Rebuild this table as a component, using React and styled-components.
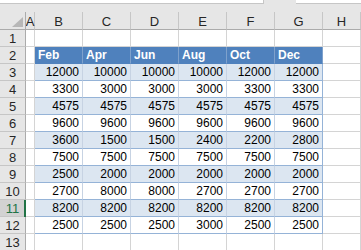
import React from 'react'
import styled, { createGlobalStyle } from 'styled-components'

const GlobalStyle = createGlobalStyle`
  html, body {
    margin: 0;
    padding: 0;
    background: #ffffff;
  }
  body {
    font-family: "Liberation Sans", Arial, sans-serif;
    overflow: hidden;
  }
`

const Sheet = styled.div`
  width: 361px;
  height: 250px;
  overflow: hidden;
  background: #e6e6e6;
`

const FormulaStrip = styled.div`
  display: flex;
  height: 4px;
  gap: 0;
`

const FormulaBox = styled.div`
  height: 3px;
  background: #ffffff;
  border-bottom: 1px solid #c6c6c6;
  border-right: ${p => (p.$edge ? '1px solid #c6c6c6' : 'none')};
  width: ${p => p.$w}px;
  margin-left: ${p => p.$ml || 0}px;
  flex: ${p => (p.$grow ? 1 : 'none')};
`

const Grid = styled.div`
  display: grid;
  grid-template-columns: 26px 9px repeat(6, 48px) 1fr;
  grid-template-rows: 8px 18px repeat(13, 17px);
  margin-top: 0;
`

const Spacer = styled.div`
  grid-column: 1 / -1;
  background: #e6e6e6;
`

const Corner = styled.div`
  position: relative;
  background: #e6e6e6;
  border-right: 1px solid #ababab;
  border-bottom: 1px solid #ababab;
  &::after {
    content: '';
    position: absolute;
    right: 2px;
    bottom: 2px;
    width: 0;
    height: 0;
    border-left: 11px solid transparent;
    border-bottom: 10px solid #b7b7b7;
  }
`

const ColHead = styled.div`
  background: #e6e6e6;
  border-right: 1px solid #c6c6c6;
  border-bottom: 1px solid #ababab;
  display: flex;
  align-items: center;
  justify-content: center;
  font-size: 13px;
  color: #262626;
  line-height: 1;
  padding-top: 1px;
`

const RowHead = styled.div`
  position: relative;
  background: ${p => (p.$active ? '#d2d2d2' : '#e6e6e6')};
  color: ${p => (p.$active ? '#217346' : '#262626')};
  border-right: 1px solid #ababab;
  border-bottom: 1px solid #c6c6c6;
  display: flex;
  align-items: center;
  justify-content: center;
  font-size: 13px;
  line-height: 1;
  &::after {
    content: '';
    display: ${p => (p.$active ? 'block' : 'none')};
    position: absolute;
    right: -1px;
    top: 0;
    bottom: -1px;
    width: 2px;
    background: #217346;
  }
`

const Cell = styled.div`
  background: ${p =>
    p.$kind === 'head' ? '#4f81bd' : p.$kind === 'band' ? '#dce6f1' : '#ffffff'};
  color: ${p => (p.$kind === 'head' ? '#ffffff' : '#000000')};
  font-weight: ${p => (p.$kind === 'head' ? 700 : 400)};
  border-right: 1px solid
    ${p =>
      p.$kind === 'head'
        ? '#7ea1cc'
        : p.$last
        ? '#95b3d7'
        : p.$kind
        ? '#c7d3e3'
        : '#d4d4d4'};
  border-bottom: 1px solid
    ${p => (p.$kind === 'head' ? '#4f81bd' : p.$kind ? '#95b3d7' : '#d4d4d4')};
  display: flex;
  align-items: center;
  justify-content: ${p => (p.$kind === 'head' ? 'flex-start' : 'flex-end')};
  padding: 0 3px;
  font-size: 12px;
  line-height: 1;
  white-space: nowrap;
  overflow: hidden;
`

const months = ['Feb', 'Apr', 'Jun', 'Aug', 'Oct', 'Dec']
const data = [
  [12000, 10000, 10000, 10000, 12000, 12000],
  [3300, 3000, 3000, 3000, 3300, 3300],
  [4575, 4575, 4575, 4575, 4575, 4575],
  [9600, 9600, 9600, 9600, 9600, 9600],
  [3600, 1500, 1500, 2400, 2200, 2800],
  [7500, 7500, 7500, 7500, 7500, 7500],
  [2500, 2000, 2000, 2000, 2000, 2000],
  [2700, 8000, 8000, 2700, 2700, 2700],
  [8200, 8200, 8200, 8200, 8200, 8200],
  [2500, 2500, 2500, 3000, 2500, 2500],
]
const letters = ['A', 'B', 'C', 'D', 'E', 'F', 'G', 'H']

export default function App() {
  const rows = []
  for (let r = 1; r <= 13; r++) {
    const cells = []
    cells.push(
      <RowHead key="h" $active={r === 11}>
        {r}
      </RowHead>
    )
    cells.push(<Cell key="a" />)
    for (let c = 0; c < 6; c++) {
      let kind
      let text = ''
      if (r === 2) {
        kind = 'head'
        text = months[c]
      } else if (r >= 3 && r <= 12) {
        kind = r % 2 === 1 ? 'band' : 'plain'
        text = data[r - 3][c]
      }
      cells.push(
        <Cell key={c} $kind={kind} $last={c === 5 && kind}>
          {text}
        </Cell>
      )
    }
    cells.push(<Cell key="h2" />)
    rows.push(<React.Fragment key={r}>{cells}</React.Fragment>)
  }

  return (
    <>
      <GlobalStyle />
      <Sheet>
        <FormulaStrip>
          <FormulaBox $w={263} $edge />
          <FormulaBox $w={0} $ml={32} $grow />
        </FormulaStrip>
        <Grid>
          <Spacer />
          <Corner />
          {letters.map(l => (
            <ColHead key={l}>{l}</ColHead>
          ))}
          {rows}
        </Grid>
      </Sheet>
    </>
  )
}
